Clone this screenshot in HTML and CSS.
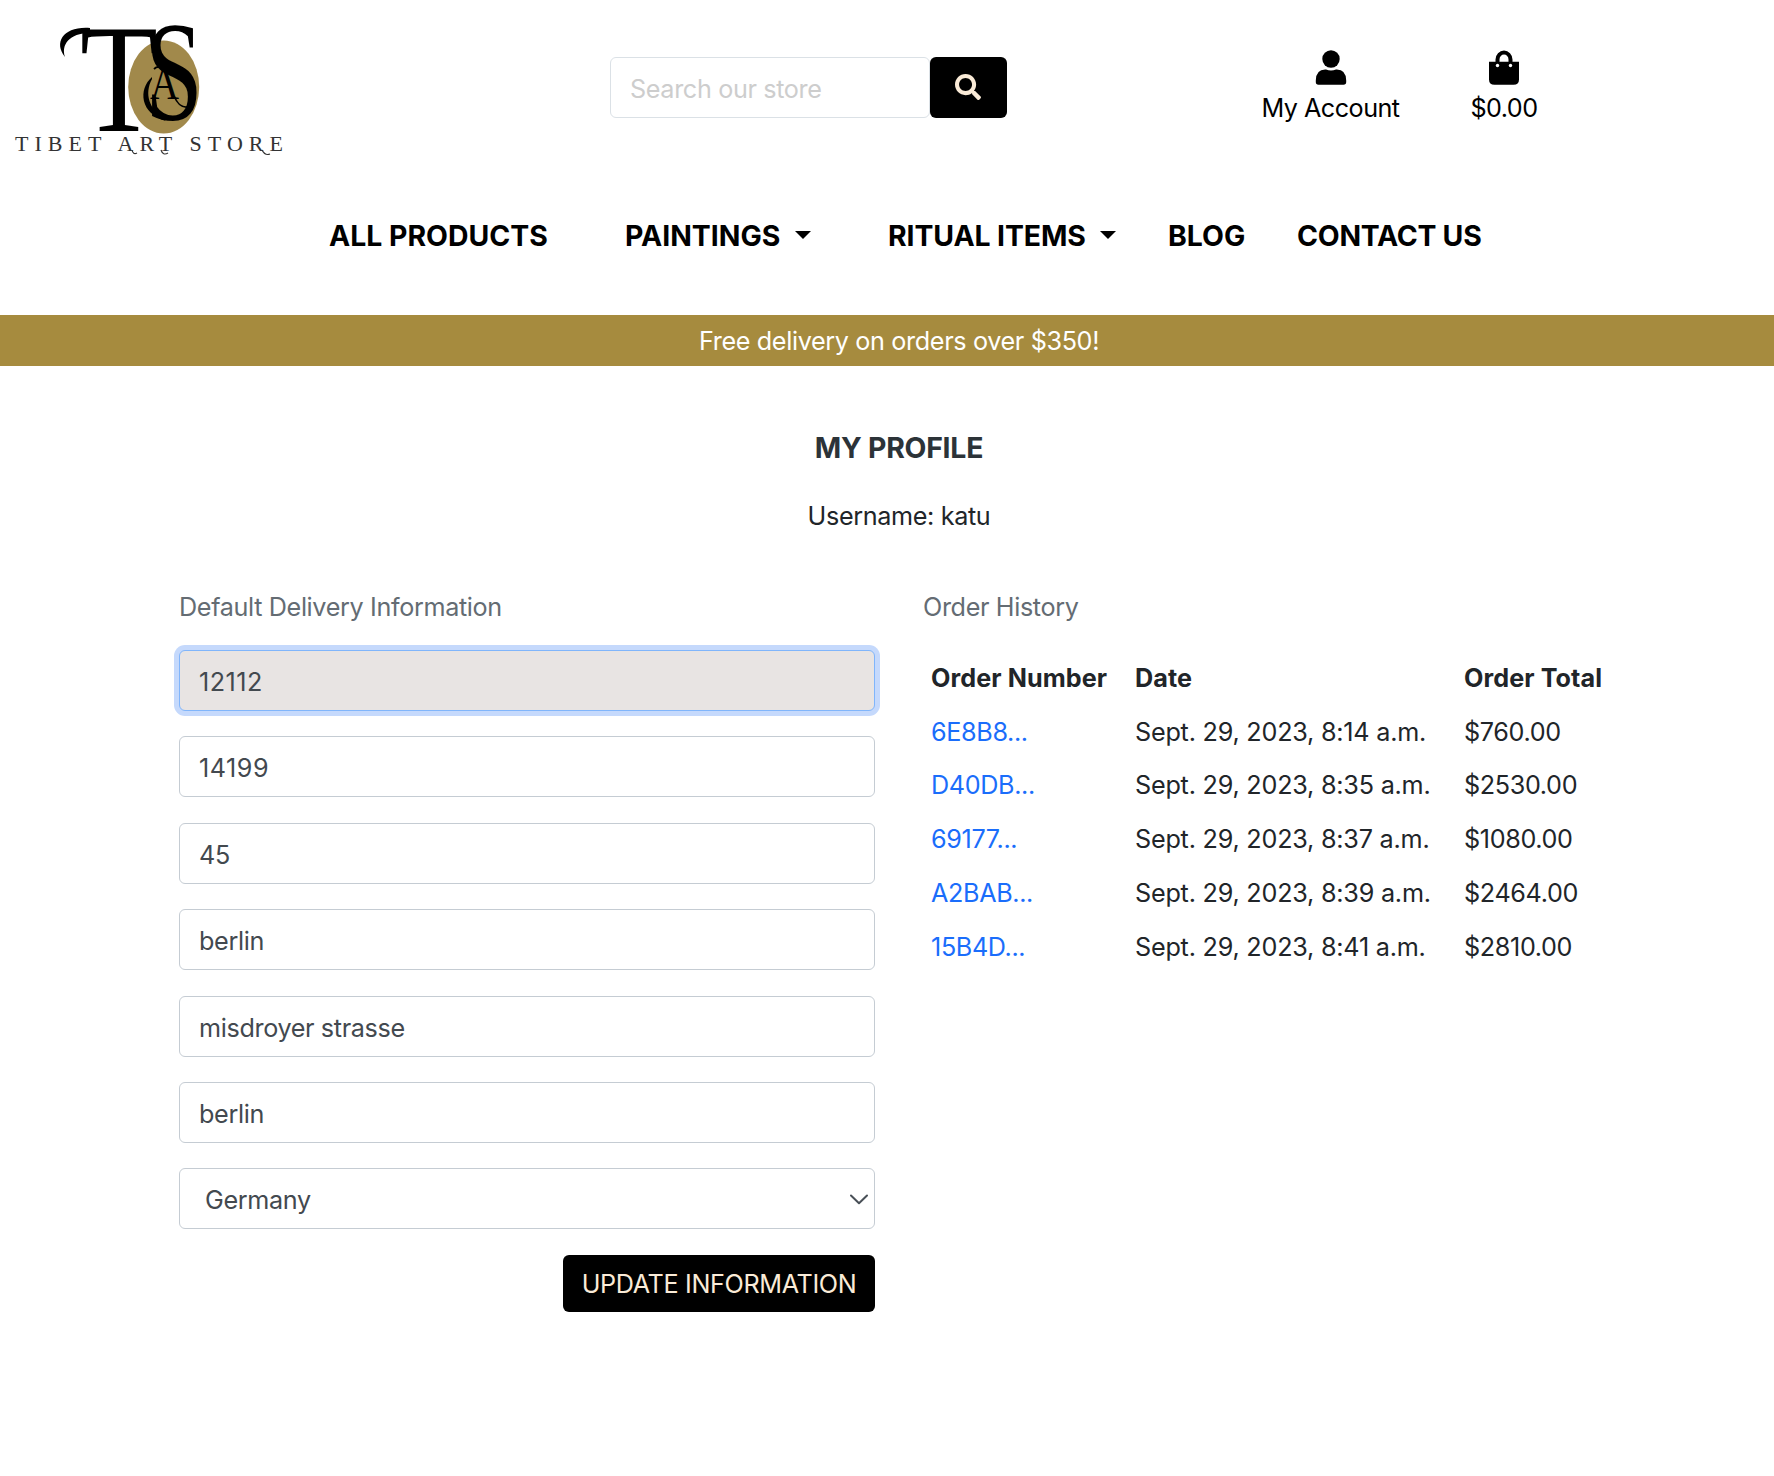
FILE: index.html
```html
<!DOCTYPE html>
<html lang="en">
<head>
<meta charset="utf-8">
<title>Tibet Art Store - My Profile</title>
<link rel="stylesheet" href="styles.css">
</head>
<body>
<header class="top">
  <a class="logo" aria-label="Tibet Art Store">
    <svg width="300" height="170" viewBox="0 0 300 170">
      <ellipse cx="163.700" cy="87" rx="35.500" ry="46.500" fill="#a1894b"/>
      <text class="mono" x="80" y="131" font-size="154" textLength="78" lengthAdjust="spacingAndGlyphs">T</text>
      <path d="M90 28C64 26 53 42 65 57C61 45 69 33 90 33Z"/>
      <text class="mono" x="145" y="120" font-size="142" textLength="58" lengthAdjust="spacingAndGlyphs">S</text>
      <path d="M152 77C138 89 140 114 166 121C149 109 144 94 152 79Z"/>
      <text class="mono" x="150" y="98.500" font-size="46" textLength="29" lengthAdjust="spacingAndGlyphs">A</text>
      <path d="M154 69C158 65 163 67 165 72M174 96C178 105 182 108 188 107" fill="none" stroke="#000" stroke-width="1.800"/>
      <text class="tagline" x="15" y="151" font-size="22" textLength="268">TIBET ART STORE</text>
      <path d="M132 150Q133 155 137 153M161 150Q163 156 168 153M262 150Q265 156 270 154" fill="none" stroke="#333" stroke-width="1.200"/>
    </svg>
  </a>
  <form class="search">
    <input class="field search-input" type="text" placeholder="Search our store">
    <button class="search-btn" type="button" aria-label="Search">
      <svg width="26" height="26" viewBox="0 0 512 512"><path fill="#faebd7" d="M505 442.700L405.300 343c-4.500-4.500-10.600-7-17-7H372c27.600-35.300 44-79.700 44-128C416 93.100 322.900 0 208 0S0 93.100 0 208s93.100 208 208 208c48.300 0 92.700-16.400 128-44v16.300c0 6.400 2.500 12.500 7 17l99.700 99.700c9.400 9.400 24.600 9.400 33.900 0l28.300-28.300c9.400-9.400 9.400-24.600.1-34zM208 336c-70.700 0-128-57.200-128-128 0-70.700 57.200-128 128-128 70.700 0 128 57.200 128 128 0 70.700-57.200 128-128 128z"/></svg>
    </button>
  </form>
  <div class="tools">
    <a class="tool account">
      <svg width="32" height="35" viewBox="0 0 32 35"><circle cx="16" cy="9" r="8.700"/><path d="M11 19.500Q16 21.700 21 19.500Q31 19 31.200 30.500V32Q31.200 34.800 28.500 34.800H3.500Q.8 34.800 .8 32V30.500Q1 19 11 19.500Z"/></svg>
      <span class="t-account">My Account</span>
    </a>
    <a class="tool bag">
      <svg width="32" height="35" viewBox="0 0 32 35"><path fill-rule="evenodd" d="M1 11.700H7.500V9.500A8.500 8.900 0 0 1 24.500 9.500V11.700H31V29.500Q31 34.800 25.500 34.800H6.500Q1 34.800 1 29.500ZM11.500 11.700H20.500V9.500A4.500 4.900 0 0 0 11.500 9.500Z"/><circle cx="9.500" cy="15.500" r="1.700" fill="#fff"/><circle cx="22.500" cy="15.500" r="1.700" fill="#fff"/></svg>
      <span class="t-account">$0.00</span>
    </a>
  </div>
</header>
<nav class="nav">
  <a class="n-all">ALL PRODUCTS</a>
  <a class="n-paint">PAINTINGS</a><i class="caret c-paint"></i>
  <a class="n-ritual">RITUAL ITEMS</a><i class="caret c-ritual"></i>
  <a class="n-blog">BLOG</a>
  <a class="n-contact">CONTACT US</a>
</nav>
<div class="banner">Free delivery on orders over $350!</div>
<main>
  <h1>MY PROFILE</h1>
  <p class="user">Username: katu</p>
  <div class="columns">
    <section class="delivery">
      <h2>Default Delivery Information</h2>
      <form class="fields">
        <input class="field focused digits" type="text" value="12112">
        <input class="field digits" type="text" value="14199">
        <input class="field" type="text" value="45">
        <input class="field" type="text" value="berlin">
        <input class="field" type="text" value="misdroyer strasse">
        <input class="field" type="text" value="berlin">
        <div class="field select"><span>Germany</span>
          <svg width="18" height="11" viewBox="0 0 18 11"><path d="M1 1.500L9 9.300L17 1.500" fill="none" stroke="#495057" stroke-width="2" stroke-linecap="round" stroke-linejoin="round"/></svg>
        </div>
        <button class="update" type="button">UPDATE INFORMATION</button>
      </form>
    </section>
    <section class="history">
      <h2>Order History</h2>
      <table>
        <thead><tr><th>Order Number</th><th>Date</th><th>Order Total</th></tr></thead>
        <tbody>
          <tr><td><a>6E8B8...</a></td><td>Sept. 29, 2023, 8:14 a.m.</td><td>$760.00</td></tr>
          <tr><td><a>D40DB...</a></td><td>Sept. 29, 2023, 8:35 a.m.</td><td>$2530.00</td></tr>
          <tr><td><a>69177...</a></td><td>Sept. 29, 2023, 8:37 a.m.</td><td>$1080.00</td></tr>
          <tr><td><a>A2BAB...</a></td><td>Sept. 29, 2023, 8:39 a.m.</td><td>$2464.00</td></tr>
          <tr><td><a>15B4D...</a></td><td>Sept. 29, 2023, 8:41 a.m.</td><td>$2810.00</td></tr>
        </tbody>
      </table>
    </section>
  </div>
</main>
</body>
</html>
```
FILE: styles.css
```css
* { box-sizing: border-box; }
body {
  margin: 0;
  background: #fff;
  color: #212529;
  font: 400 25.200px/38px Inter, "Liberation Sans", sans-serif;
  letter-spacing: -0.360px;
}
h1, h2, p { margin: 0; }
input, button { font: inherit; letter-spacing: inherit; margin: 0; }
svg { display: block; flex: none; }

.top { display: flex; height: 176px; }
.logo { width: 610px; flex: none; }
.mono { font-family: "Liberation Serif", serif; letter-spacing: 0; }
.tagline { font-family: "Liberation Serif", serif; fill: #333; letter-spacing: 0; }
.search { display: flex; width: 397px; height: 61px; margin-top: 57px; flex: none; }
.search-input { width: 320px; }
.search .search-input { border-color: #dbe1e6; }
.search-input::placeholder { color: #cdcdcd; opacity: 1; }
.search-btn {
  display: flex; align-items: center; justify-content: center;
  width: 77px; height: 61px; padding: 0 2px 1px 0; border: 0; border-radius: 6px; background: #000;
}
.tools { display: flex; color: #000; }
.tool { display: flex; flex-direction: column; align-items: center; padding-top: 50px; gap: 4px; white-space: nowrap; }
.account { width: 140px; margin-left: 253.500px; }
.bag { width: 80px; margin-left: 63.500px; }
.t-account { letter-spacing: -0.520px; }

.nav {
  display: flex; height: 139px; padding: 41px 0 0 329px;
  color: #000; font-size: 28.400px; font-weight: 700; letter-spacing: 0; white-space: nowrap;
}
.nav a { flex: none; }
.n-all { width: 296px; }
.n-paint { width: 170px; }
.nav .n-ritual { width: 212px; letter-spacing: -0.100px; }
.n-blog { width: 129px; }
.nav .n-contact { letter-spacing: -0.250px; }
.caret {
  width: 0; height: 0; margin-top: 14px; flex: none;
  border: 8px solid transparent; border-top-color: #000; border-bottom: 0;
}
.c-paint { margin-right: 77px; }
.c-ritual { margin-right: 52px; }

.banner {
  display: flex; align-items: center; justify-content: center;
  height: 51px; padding-left: 24px; background: #a68b3e; color: #fff;
}
main { padding: 63px 151px 0 179px; }
h1 {
  font-size: 28.400px; line-height: 38px; text-align: center; font-weight: 700;
  color: #2c3338; letter-spacing: -0.250px; padding-right: 4px;
}
.user { margin-top: 30px; text-align: center; padding-right: 4px; }
h2 { font-size: 25.200px; line-height: 38px; font-weight: 400; color: #646c73; }
.columns { display: flex; gap: 48px; margin-top: 53px; }
.delivery { width: 696px; flex: none; }
.history { width: 700px; flex: none; }
.fields { display: flex; flex-direction: column; gap: 25.400px; margin-top: 24px; }
.field {
  display: block; height: 61px; padding: 3px 19px 0; flex: none;
  border: 1px solid #c5ccd3; border-radius: 6px; background: #fff;
  color: #43494f; outline: 0;
}
.fields .field { width: 696px; }
.digits { letter-spacing: 0.500px; }
.focused { background: #e8e4e3; border-color: #80b5fb; box-shadow: 0 0 0 5px #c5d9fc; }
.fields .select { display: flex; align-items: center; justify-content: space-between; padding: 2px 6px 0 25px; }
.update {
  align-self: flex-end; width: 312px; height: 57px; padding: 2px 0 0;
  border: 0; border-radius: 6px; background: #000; color: #faebd7; white-space: nowrap;
}

table { border-collapse: collapse; table-layout: fixed; width: 700px; margin-top: 25px; }
th, td { height: 53.800px; padding: 0 0 0 8px; text-align: left; white-space: nowrap; }
th { font-weight: 700; letter-spacing: 0.080px; }
th:nth-child(1) { width: 204px; }
th:nth-child(2) { width: 329px; }
td:nth-child(2) { letter-spacing: -0.220px; }
td a { color: #1a6dfb; }
```
